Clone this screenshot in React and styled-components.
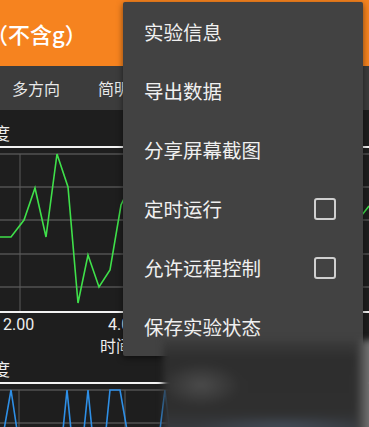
import React from 'react'
import styled, { createGlobalStyle } from 'styled-components'

const GlobalStyle = createGlobalStyle`
  html, body {
    margin: 0;
    padding: 0;
    background: #1e1e1e;
  }
  body {
    font-family: "Noto Sans CJK SC", "Noto Sans", sans-serif;
    color: #ececec;
  }
`

const Screen = styled.div`
  position: relative;
  width: 369px;
  height: 427px;
  overflow: hidden;
  background: #1e1e1e;
`

const Header = styled.header`
  height: 66px;
  background: #f6831f;
  display: flex;
  align-items: center;
  overflow: hidden;
`

const Title = styled.h1`
  margin: 0 0 0 -14px;
  font-size: 22px;
  font-weight: 500;
  color: #fff;
  white-space: nowrap;
`

const TabBar = styled.nav`
  height: 44px;
  background: #3c3c3c;
  display: flex;
  align-items: center;
`

const Tab = styled.div`
  padding: 0 12px;
  margin-right: 14px;
  font-size: 16px;
  color: #e8e8e8;
  white-space: nowrap;
`

const ChartTitle = styled.div`
  height: ${p => p.h}px;
  box-sizing: border-box;
  padding-top: ${p => p.top || 0}px;
  display: flex;
  align-items: center;
  font-size: 17px;
  color: #eee;
  overflow: hidden;
  span {
    margin-left: -7px;
  }
`

const Plot = styled.svg`
  display: block;
  width: 369px;
  height: ${p => p.h}px;
`

const AxisRow = styled.div`
  height: 22px;
  display: flex;
  align-items: center;
  font-family: Roboto, "Noto Sans", sans-serif;
  font-size: 16px;
  color: #eee;
`

const Tick = styled.span`
  width: ${p => p.w}px;
  padding-left: ${p => p.pad || 0}px;
`

const AxisName = styled.div`
  height: 20px;
  padding-left: 100px;
  display: flex;
  align-items: center;
  font-size: 16px;
  color: #eee;
`

const Menu = styled.ul`
  position: absolute;
  top: 2px;
  left: 123px;
  width: 240px;
  margin: 0;
  padding: 0;
  list-style: none;
  background: #424242;
  border-radius: 2px;
  box-shadow: 0 2px 6px rgba(0, 0, 0, 0.5);
`

const Item = styled.li`
  height: 59px;
  padding: 0 27px 0 21px;
  display: flex;
  align-items: center;
  justify-content: space-between;
  font-size: 19.5px;
  color: #f0f0f0;
  white-space: nowrap;
`

const Check = styled.span`
  width: 18px;
  height: 18px;
  border: 2px solid #cfcfcf;
  border-radius: 3px;
`

const Blur = styled.div`
  position: absolute;
  left: 163px;
  top: 340px;
  width: 212px;
  height: 95px;
  background:
    radial-gradient(ellipse 40px 22px at 38px 45px, rgba(110, 110, 110, 0.45), transparent),
    radial-gradient(ellipse 90px 10px at 120px 86px, rgba(80, 95, 115, 0.5), transparent),
    linear-gradient(to bottom, #3d3d3d 0px, #2e2e2e 18px, #2f2f2f 70px, #3a3e44 100%);
  filter: blur(3px);
  &::after {
    content: '';
    position: absolute;
    right: 0;
    top: 0;
    bottom: 0;
    width: 18px;
    background: linear-gradient(to right, #3a3a3a, #8a8a8a);
  }
`

const green = [
  [0, 91], [11, 91], [24, 74], [35, 42], [46, 91], [57, 8], [68, 41],
  [78, 157], [88, 109], [99, 141], [110, 124], [121, 59], [135, 30],
  [150, 100], [170, 60], [190, 140], [210, 90], [240, 40], [270, 120],
  [300, 70], [330, 110], [369, 60],
]

const blue = [
  [4, 48], [11, 8], [17, 48], [63, 48], [67, 8], [71, 48], [84, 48],
  [88, 8], [92, 48], [106, 48], [110, 8], [120, 8], [127, 48],
  [160, 48], [165, 8], [170, 48], [369, 48],
]

const pts = arr => arr.map(p => p.join(',')).join(' ')

const Grid = ({ rows, cols, bottom }) => (
  <>
    {rows.map(y => (
      <line key={'r' + y} x1="0" x2="369" y1={y} y2={y} stroke="#6a6a6a" strokeWidth="1" />
    ))}
    {cols.map(x => (
      <line key={'c' + x} x1={x} x2={x} y1={rows[0]} y2={bottom} stroke="#5a5a5a" strokeWidth="1" />
    ))}
  </>
)

const App = () => {
  return (
    <>
      <GlobalStyle />
      <Screen>
        <Header>
          <Title>（不含g）</Title>
        </Header>
        <TabBar>
          <Tab>多方向</Tab>
          <Tab>简明</Tab>
        </TabBar>

        <ChartTitle h={36} top={8}><span>度</span></ChartTitle>
        <Plot h={167}>
          <line x1="0" x2="369" y1="1" y2="1" stroke="#f2f2f2" strokeWidth="2" />
          <Grid rows={[8, 41, 74, 108, 141]} cols={[20, 125, 230, 335]} bottom={165} />
          <polyline points={pts(green)} fill="none" stroke="#3fe04a" strokeWidth="1.6" />
          <line x1="0" x2="369" y1="166" y2="166" stroke="#f2f2f2" strokeWidth="2" />
        </Plot>
        <AxisRow>
          <Tick w={105} pad={3}>2.00</Tick>
          <Tick w={60}>4.00</Tick>
        </AxisRow>
        <AxisName>时间</AxisName>

        <ChartTitle h={27}><span>度</span></ChartTitle>
        <Plot h={60}>
          <line x1="0" x2="369" y1="1" y2="1" stroke="#f2f2f2" strokeWidth="2" />
          <Grid rows={[8, 41]} cols={[19, 125, 230, 335]} bottom={60} />
          <polyline points={pts(blue)} fill="none" stroke="#2e8fe6" strokeWidth="1.6" />
        </Plot>

        <Menu>
          <Item>实验信息</Item>
          <Item>导出数据</Item>
          <Item>分享屏幕截图</Item>
          <Item>定时运行<Check /></Item>
          <Item>允许远程控制<Check /></Item>
          <Item>保存实验状态</Item>
        </Menu>
        <Blur />
      </Screen>
    </>
  )
}

export default App
